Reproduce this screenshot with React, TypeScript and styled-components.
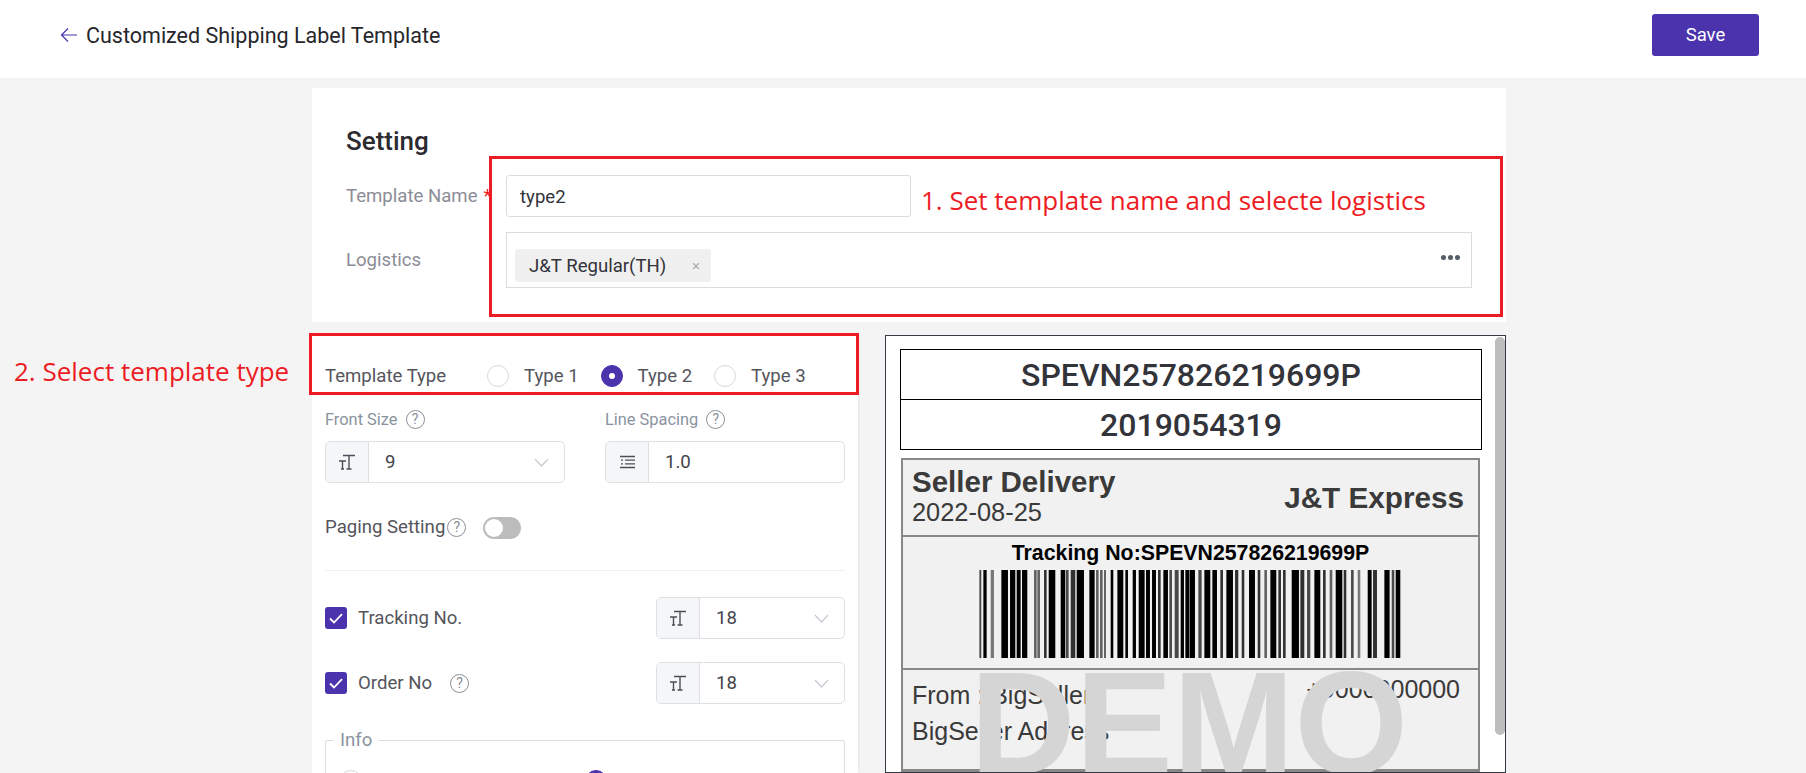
import React from "react";
import styled, { createGlobalStyle } from "styled-components";

const Global = createGlobalStyle`
  html, body { margin: 0; padding: 0; height: 773px; overflow: hidden; background: #f4f4f4; }
  body { font-family: Roboto, "Liberation Sans", sans-serif; }
  #root { height: 773px; }
  * { box-sizing: border-box; }
`;

const Page = styled.div`
  position: relative;
  height: 773px;
  overflow: hidden;
  background: #f4f4f4;
`;
const Header = styled.header`
  height: 78px;
  background: #fff;
  display: flex;
  align-items: center;
  justify-content: space-between;
  padding: 0 47px 8px 60px;
`;
const BackLink = styled.div`
  display: flex;
  align-items: center;
  gap: 8px;
  font-size: 21.5px;
  color: #26262b;
`;
const SaveButton = styled.button`
  width: 107px;
  height: 42px;
  border: 0;
  border-radius: 3px;
  background: #4a33ad;
  color: #fff;
  font: 400 18.5px Roboto, sans-serif;
`;
const Main = styled.main`
  width: 1194px;
  margin-left: 312px;
  padding-top: 10px;
  display: flex;
  flex-direction: column;
  gap: 13px;
`;
const SettingPanel = styled.section`
  height: 234px;
  background: #fff;
  padding: 38px 34px 0;
`;
const SettingTitle = styled.h2`
  margin: 0 0 19px;
  font-size: 26px;
  line-height: 30px;
  font-weight: 500;
  color: #2b2b30;
`;
const FormRow = styled.div`
  display: flex;
  align-items: center;
  margin-bottom: 15px;
`;
const FormLabel = styled.label`
  width: 160px;
  font-size: 18.6px;
  color: #8c8c96;
  white-space: nowrap;
  margin-bottom: 1px;
  span { color: #ed1c24; margin-left: 6px; }
`;
const NameInput = styled.div`
  width: 405px;
  height: 42px;
  border: 1px solid #dcdcdc;
  border-radius: 3px;
  padding: 1px 13px 0;
  display: flex;
  align-items: center;
  font-size: 18.6px;
  color: #33333a;
`;
const LogisticsBox = styled.div`
  width: 966px;
  height: 56px;
  border: 1px solid #dcdcdc;
  padding: 16px 11px 0 8px;
  display: flex;
  justify-content: space-between;
  align-items: flex-start;
`;
const Tag = styled.div`
  width: 196px;
  height: 33px;
  border-radius: 3px;
  background: #f0f0f0;
  padding: 0 11px 0 14px;
  display: flex;
  align-items: center;
  justify-content: space-between;
  font-size: 18.6px;
  color: #33333a;
  i { font-style: normal; font-size: 15px; color: #b0b0b0; }
`;
const Dots = styled.div`
  display: flex;
  gap: 2px;
  margin-top: 6px;
  b { width: 5px; height: 5px; border-radius: 50%; background: #555c66; }
`;
const Columns = styled.div`
  height: 438px;
  display: flex;
  gap: 27px;
  overflow: hidden;
`;
const LeftPanel = styled.section`
  width: 546px;
  background: #fff;
  padding: 30px 13px 0;
  box-shadow: 0 0 3px rgba(0, 0, 0, 0.12);
`;
const TypeRow = styled.div`
  display: flex;
  align-items: center;
  height: 22px;
  font-size: 18.6px;
  color: #55555c;
  margin-bottom: 21px;
`;
const TypeTitle = styled.div`
  width: 162px;
`;
const TypeOption = styled.div`
  width: 113.5px;
  display: flex;
  align-items: center;
  gap: 15px;
`;
const Radio = styled.span<{ $on?: boolean }>`
  flex: none;
  width: 22px;
  height: 22px;
  border-radius: 50%;
  border: 1px solid ${(p) => (p.$on ? "#4a33ad" : "#d9d9d9")};
  background: ${(p) => (p.$on ? "#4a33ad" : "#fff")};
  display: flex;
  align-items: center;
  justify-content: center;
  &::after {
    content: "";
    display: ${(p) => (p.$on ? "block" : "none")};
    width: 6px;
    height: 6px;
    border-radius: 50%;
    background: #fff;
  }
`;
const FieldGrid = styled.div`
  display: grid;
  grid-template-columns: 240px 240px;
  column-gap: 40px;
`;
const FieldLabel = styled.div`
  display: flex;
  align-items: center;
  gap: 8px;
  height: 22px;
  margin-bottom: 11px;
  font-size: 16.4px;
  color: #8a93a0;
`;
const Help = styled.span`
  flex: none;
  width: 19px;
  height: 19px;
  border: 1.5px solid #8a8f99;
  border-radius: 50%;
  display: inline-flex;
  align-items: center;
  justify-content: center;
  font-size: 14px;
  color: #8a8f99;
`;
const InputGroup = styled.div<{ $width?: number }>`
  width: ${(p) => p.$width ?? 240}px;
  height: 42px;
  border: 1px solid #dcdfe4;
  border-radius: 5px;
  display: flex;
  align-items: stretch;
  overflow: hidden;
  background: #fff;
`;
const Addon = styled.div`
  flex: none;
  width: 43px;
  background: #f5f6f8;
  border-right: 1px solid #dcdfe4;
  display: flex;
  align-items: center;
  justify-content: center;
`;
const GroupValue = styled.div`
  flex: 1;
  display: flex;
  align-items: center;
  justify-content: space-between;
  padding: 0 15px 0 16px;
  font-size: 18.6px;
  color: #44444c;
  span { margin-bottom: 1px; }
`;
const PagingRow = styled.div`
  margin-top: 33px;
  height: 22px;
  display: flex;
  align-items: center;
  font-size: 18.6px;
  color: #55555c;
  ${Help} { margin-left: 2px; }
`;
const Switch = styled.span`
  width: 38px;
  height: 22px;
  margin-left: 17px;
  margin-top: 1px;
  border-radius: 11px;
  background: #bcbcbc;
  display: flex;
  align-items: center;
  padding-left: 2px;
  &::before {
    content: "";
    width: 18px;
    height: 18px;
    border-radius: 50%;
    background: #fff;
  }
`;
const Divider = styled.hr`
  border: 0;
  border-top: 1px solid #f0f0f0;
  margin: 32px 0 26px;
`;
const CheckRow = styled.div`
  height: 42px;
  margin-bottom: 23px;
  display: flex;
  align-items: center;
  justify-content: space-between;
`;
const CheckLabel = styled.div`
  display: flex;
  align-items: center;
  font-size: 18.6px;
  color: #55555c;
`;
const CheckBox = styled.span`
  width: 22px;
  height: 22px;
  margin-right: 11px;
  border-radius: 3px;
  background: #4a33ad;
  display: flex;
  align-items: center;
  justify-content: center;
`;
const HelpGap = styled.span`
  display: inline-flex;
  margin-left: 18px;
`;
const InfoBox = styled.fieldset`
  margin: 24px 0 0;
  padding: 18px 14px 20px;
  border: 1px solid #dddddd;
  border-radius: 2px;
  display: flex;
  gap: 223px;
  min-width: 0;
`;
const InfoLegend = styled.legend`
  margin-left: -6px;
  padding: 0 6px;
  font-size: 18.6px;
  line-height: 24px;
  color: #8a93a0;
`;
const Preview = styled.section`
  position: relative;
  width: 621px;
  background: #fff;
  border: 1px solid #333a44;
  padding: 13px 0 0 14px;
  overflow: hidden;
`;
const ScrollThumb = styled.div`
  position: absolute;
  right: 0;
  top: 1px;
  width: 10px;
  height: 398px;
  border-radius: 5px;
  background: #bdbdbd;
`;
const CodeTable = styled.div`
  width: 582px;
  border: 1px solid #000;
`;
const CodeRow = styled.div`
  height: 49px;
  display: flex;
  align-items: center;
  justify-content: center;
  font-size: 32px;
  font-weight: 500;
  color: #33333a;
  & + & { border-top: 1px solid #000; height: 50px; }
`;
const Label = styled.div`
  width: 579px;
  margin: 8px 0 0 1px;
  background: #f1f1f1;
  border: 2px solid #888;
  font-family: "Liberation Sans", Arial, sans-serif;
  color: #3a3a3a;
`;
const LabelTop = styled.div`
  height: 77px;
  padding: 6px 14px 0 9px;
  display: flex;
  justify-content: space-between;
  border-bottom: 2px solid #888;
`;
const DeliveryTitle = styled.div`
  font-size: 29.5px;
  line-height: 32px;
  font-weight: 700;
`;
const DeliveryDate = styled.div`
  font-size: 25.4px;
  line-height: 28px;
`;
const Carrier = styled.div`
  margin-top: 15px;
  font-size: 29.7px;
  line-height: 34px;
  font-weight: 700;
`;
const LabelBarcode = styled.div`
  height: 133px;
  padding-top: 4px;
  border-bottom: 2px solid #888;
  display: flex;
  flex-direction: column;
  align-items: center;
  color: #000;
  svg { margin-left: 4px; }
`;
const TrackingText = styled.div`
  font-size: 21.3px;
  line-height: 24px;
  font-weight: 700;
  margin-bottom: 5px;
`;
const LabelFrom = styled.div`
  height: 101px;
  padding: 7px 18px 0 9px;
  border-bottom: 2px solid #888;
  font-size: 25px;
  line-height: 36px;
  display: flex;
  justify-content: space-between;
`;
const Phone = styled.div`
  margin-top: -6px;
`;
const Watermark = styled.div`
  position: absolute;
  left: 84px;
  top: 315px;
  font: 700 146px/1 "Liberation Sans", Arial, sans-serif;
  color: #d5d5d5;
`;
const RedBox = styled.div<{ $l: number; $t: number; $w: number; $h: number }>`
  position: absolute;
  left: ${(p) => p.$l}px;
  top: ${(p) => p.$t}px;
  width: ${(p) => p.$w}px;
  height: ${(p) => p.$h}px;
  border: 3px solid #ed1c24;
`;
const Note = styled.div<{ $l: number; $t: number }>`
  position: absolute;
  left: ${(p) => p.$l}px;
  top: ${(p) => p.$t}px;
  font: 400 26px/34px "Open Sans", "Noto Sans", sans-serif;
  color: #ed1c24;
  white-space: nowrap;
`;

const Arrow = () => (
  <svg width="18" height="16" viewBox="0 0 18 16" fill="none" stroke="#4a33ad" strokeWidth="1.2">
    <path d="M17 8H1.5M8 1.5 1.5 8 8 14.5" />
  </svg>
);
const Chevron = () => (
  <svg width="15" height="9" viewBox="0 0 15 9" fill="none" stroke="#c6cad0" strokeWidth="1.2">
    <path d="M1 1l6.5 7L14 1" />
  </svg>
);
const FontIcon = () => (
  <svg width="18" height="16" viewBox="0 0 18 16" fill="none" stroke="#4a5058" strokeWidth="1.4">
    <path d="M5 1.5h12M11 1.5V15M8.5 15h5M1 7h7M4.5 7v8M3 15h3" />
  </svg>
);
const SpacingIcon = () => (
  <svg width="15" height="14" viewBox="0 0 15 14" fill="none" stroke="#4a5058" strokeWidth="1.3">
    <path d="M0 1.5h15M5 5.2h10M5 8.8h10M0 12.5h15M1 5.2h2M1 8.8h2" />
  </svg>
);
const Tick = () => (
  <svg width="14" height="11" viewBox="0 0 14 11" fill="none" stroke="#fff" strokeWidth="1.8">
    <path d="M1 5.5 5 9.5 13 1.2" />
  </svg>
);

const barsA: number[][] = [[14,18,.7],[26,34],[48,56,.5],[80,98],[106,120],[126,136],[142,156],[178,184,.6],[188,194,.6],[208,214,.8],[222,240],[258,270],[274,280,.7],[288,300,.8],[306,326],[344,358],[364,370,.6],[376,382,.6],[388,392,.6],[408,414],[428,444],[452,458],[474,482],[492,508],[514,524],[532,542],[550,556,.8],[566,578],[584,590,.7],[600,610,.7],[618,626],[632,642]];
const barsB: number[][] = [[0,14],[26,34,.7],[44,60],[68,80],[92,98,.8],[110,128],[136,144,.8],[156,162,.8],[178,194],[204,210,.8],[224,230,.6],[242,258],[266,272,.8],[280,286,.8],[306,326],[332,342,.8],[352,360,.7],[374,390],[400,406,.8],[420,426,.6],[438,456],[462,468,.8],[484,490,.7],[504,510,.5],[534,544],[550,560,.8],[584,598],[606,612,.7],[618,630]];

const Barcode = () => (
  <svg width="436" height="88" viewBox="0 0 436 88">
    {barsA.map(([a, b, o = 1]) => (
      <rect key={"a" + a} x={a / 3 - 0.3} width={(b - a) / 3 + 0.6} height="88" fill="#000" opacity={o} />
    ))}
    {barsB.map(([a, b, o = 1]) => (
      <rect key={"b" + a} x={a / 3 + 214.7} width={(b - a) / 3 + 0.6} height="88" fill="#000" opacity={o} />
    ))}
  </svg>
);

export default function App() {
  return (
    <Page>
      <Global />
      <Header>
        <BackLink>
          <Arrow />
          Customized Shipping Label Template
        </BackLink>
        <SaveButton>Save</SaveButton>
      </Header>
      <Main>
        <SettingPanel>
          <SettingTitle>Setting</SettingTitle>
          <FormRow>
            <FormLabel>Template Name<span>*</span></FormLabel>
            <NameInput>type2</NameInput>
          </FormRow>
          <FormRow>
            <FormLabel>Logistics</FormLabel>
            <LogisticsBox>
              <Tag>J&amp;T Regular(TH)<i>×</i></Tag>
              <Dots><b /><b /><b /></Dots>
            </LogisticsBox>
          </FormRow>
        </SettingPanel>
        <Columns>
          <LeftPanel>
            <TypeRow>
              <TypeTitle>Template Type</TypeTitle>
              <TypeOption><Radio />Type 1</TypeOption>
              <TypeOption><Radio $on />Type 2</TypeOption>
              <TypeOption><Radio />Type 3</TypeOption>
            </TypeRow>
            <FieldGrid>
              <div>
                <FieldLabel>Front Size<Help>?</Help></FieldLabel>
                <InputGroup>
                  <Addon><FontIcon /></Addon>
                  <GroupValue><span>9</span><Chevron /></GroupValue>
                </InputGroup>
              </div>
              <div>
                <FieldLabel>Line Spacing<Help>?</Help></FieldLabel>
                <InputGroup>
                  <Addon><SpacingIcon /></Addon>
                  <GroupValue>1.0</GroupValue>
                </InputGroup>
              </div>
            </FieldGrid>
            <PagingRow>Paging Setting<Help>?</Help><Switch /></PagingRow>
            <Divider />
            <CheckRow>
              <CheckLabel><CheckBox><Tick /></CheckBox>Tracking No.</CheckLabel>
              <InputGroup $width={189}>
                <Addon><FontIcon /></Addon>
                <GroupValue><span>18</span><Chevron /></GroupValue>
              </InputGroup>
            </CheckRow>
            <CheckRow>
              <CheckLabel>
                <CheckBox><Tick /></CheckBox>Order No
                <HelpGap><Help>?</Help></HelpGap>
              </CheckLabel>
              <InputGroup $width={189}>
                <Addon><FontIcon /></Addon>
                <GroupValue><span>18</span><Chevron /></GroupValue>
              </InputGroup>
            </CheckRow>
            <InfoBox>
              <InfoLegend>Info</InfoLegend>
              <Radio />
              <Radio $on />
            </InfoBox>
          </LeftPanel>
          <Preview>
            <CodeTable>
              <CodeRow>SPEVN257826219699P</CodeRow>
              <CodeRow>2019054319</CodeRow>
            </CodeTable>
            <Label>
              <LabelTop>
                <div>
                  <DeliveryTitle>Seller Delivery</DeliveryTitle>
                  <DeliveryDate>2022-08-25</DeliveryDate>
                </div>
                <Carrier>J&amp;T Express</Carrier>
              </LabelTop>
              <LabelBarcode>
                <TrackingText>Tracking No:SPEVN257826219699P</TrackingText>
                <Barcode />
              </LabelBarcode>
              <LabelFrom>
                <div>From : BigSeller<br />BigSeller Address</div>
                <Phone>+9000000000</Phone>
              </LabelFrom>
            </Label>
            <Watermark>DEMO</Watermark>
            <ScrollThumb />
          </Preview>
        </Columns>
      </Main>
      <RedBox $l={489} $t={156} $w={1014} $h={161} />
      <RedBox $l={309} $t={333} $w={550} $h={62} />
      <Note $l={921} $t={183}>1. Set template name and selecte logistics</Note>
      <Note $l={14} $t={354}>2. Select template type</Note>
    </Page>
  );
}
